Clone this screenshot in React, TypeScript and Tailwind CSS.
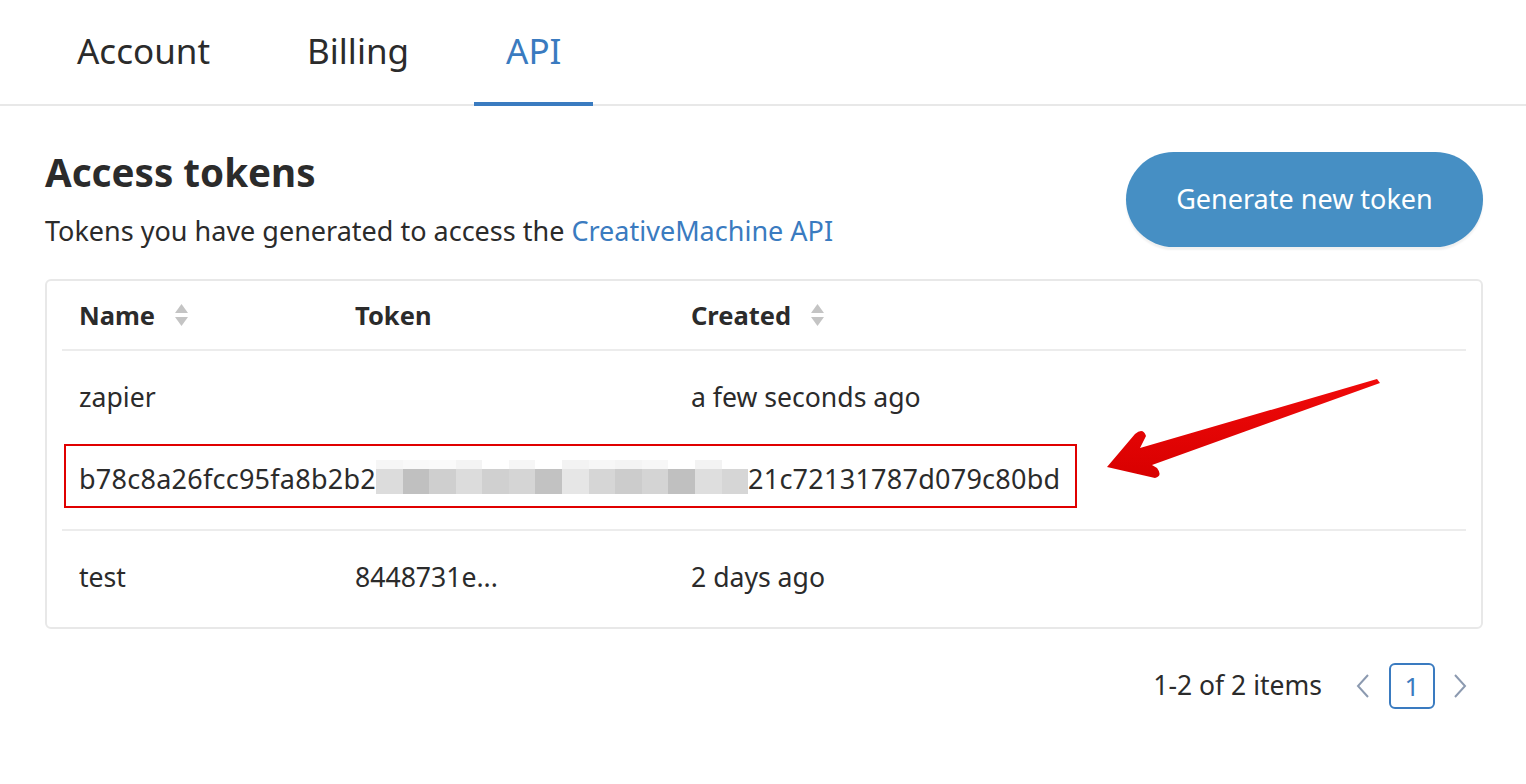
import React from "react";

const blurTop = ["#f6f6f6","#f9f9f9","#fafafa","#f4f4f4","#ffffff","#f6f6f6","#ffffff","#f3f3f3","#f7f7f7","#f4f4f4","#f7f7f7","#ffffff","#f3f3f3","#ffffff"];
const blurBottom = ["#dcdcdc","#c0c0c0","#cfcfcf","#dcdcdc","#d0d0d0","#d5d5d5","#c2c2c2","#e6e6e6","#d6d6d6","#cccccc","#d4d4d4","#c0c0c0","#dedede","#d6d6d6"];

function SortIcon() {
  return (
    <svg width="15" height="24" viewBox="0 0 15 24" className="ml-[19px]">
      <path d="M7.5 1 L14 10 L1 10 Z" fill="#c4c4c4" />
      <path d="M7.5 23 L14 14 L1 14 Z" fill="#c4c4c4" />
    </svg>
  );
}

function Chevron({ dir }: { dir: "left" | "right" }) {
  return (
    <svg width="14" height="26" viewBox="0 0 14 26">
      {dir === "left" ? (
        <polyline points="12,2 2,13 12,24" fill="none" stroke="#8c9ab0" strokeWidth="2" />
      ) : (
        <polyline points="2,2 12,13 2,24" fill="none" stroke="#8c9ab0" strokeWidth="2" />
      )}
    </svg>
  );
}

export default function App() {
  return (
    <div className="relative w-[1526px] h-[784px] bg-white text-[#2b2b2b] font-['Noto_Sans',sans-serif] overflow-hidden">
      <nav className="flex h-[106px] border-b-2 border-[#e8e8e8] pl-[45px] gap-[33px]">
        <div className="px-[32px] flex items-center text-[35px] pb-[2px]">Account</div>
        <div className="px-[32px] flex items-center text-[35px] pb-[2px]">Billing</div>
        <div className="px-[32px] flex items-center text-[35px] text-[#3a7bc0] border-b-4 border-[#3a7bc0] -mb-[2px]">API</div>
      </nav>

      <div className="pl-[45px] pr-[43px]">
        <div className="flex justify-between items-start pt-[42px]">
          <div>
            <h1 className="text-[38.6px] font-bold leading-[48px]">Access tokens</h1>
            <p className="mt-[17px] text-[27px] leading-[36px]">
              Tokens you have generated to access the <span className="text-[#3a7bc0]">CreativeMachine API</span>
            </p>
          </div>
          <button className="mt-[4px] h-[95px] w-[357px] rounded-full bg-[#468fc4] text-white text-[27px] shadow-[0_3px_2px_rgba(0,0,0,0.06)]">
            Generate new token
          </button>
        </div>

        <div className="mt-[30px] h-[350px] border-2 border-[#e8e8e8] rounded-[6px] px-[15px]">
          <div className="h-[70px] flex items-center border-b-2 border-[#ececec] text-[25.5px] font-bold">
            <div className="w-[276px] pl-[17px] flex items-center">Name<SortIcon /></div>
            <div className="w-[336px] pl-[17px]">Token</div>
            <div className="pl-[17px] flex items-center">Created<SortIcon /></div>
          </div>
          <div className="pb-[21px] border-b-2 border-[#ececec] text-[26.6px]">
            <div className="h-[90px] pt-[4px] flex items-center">
              <div className="w-[276px] pl-[17px]">zapier</div>
              <div className="w-[336px] pl-[17px]"></div>
              <div className="pl-[17px]">a few seconds ago</div>
            </div>
            <div className="mt-[3px] ml-[2px] w-[1013px] h-[64px] border-2 border-[#e00000] pl-[13px] pt-[7px] flex items-center text-[27px] tracking-[0.25px]">
              <span>b78c8a26fcc95fa8b2b2</span>
              <div className="w-[372px] h-[34px] -mt-[5px] flex flex-col">
                <div className="h-[9px] flex">
                  {blurTop.map((c, i) => (
                    <div key={i} className="flex-1" style={{ backgroundColor: c }} />
                  ))}
                </div>
                <div className="flex-1 flex">
                  {blurBottom.map((c, i) => (
                    <div key={i} className="flex-1" style={{ backgroundColor: c }} />
                  ))}
                </div>
              </div>
              <span>21c72131787d079c80bd</span>
            </div>
          </div>
          <div className="h-[90px] pt-[4px] flex items-center text-[26.6px]">
            <div className="w-[276px] pl-[17px]">test</div>
            <div className="w-[336px] pl-[17px]">8448731e...</div>
            <div className="pl-[17px]">2 days ago</div>
          </div>
        </div>

        <div className="mt-[34px] flex justify-end items-center pr-[16px]">
          <span className="text-[26.5px]">1-2 of 2 items</span>
          <div className="ml-[34px]"><Chevron dir="left" /></div>
          <div className="ml-[19px] w-[46px] h-[46px] border-2 border-[#3a7bc0] rounded-[6px] flex items-center justify-center text-[26px] text-[#3a7bc0]">1</div>
          <div className="ml-[18px]"><Chevron dir="right" /></div>
        </div>
      </div>

      <svg className="absolute left-0 top-0 pointer-events-none" width="1526" height="784" viewBox="0 0 1526 784">
        <defs>
          <linearGradient id="arr" x1="0" y1="0" x2="0" y2="1">
            <stop offset="0" stopColor="#f00a0a" />
            <stop offset="1" stopColor="#d80000" />
          </linearGradient>
        </defs>
        <path
          d="M1377 379 L1380 383 L1152 465 L1157 468 Q1163 476 1155 478 L1107 467 L1135 434 Q1143 427 1146 436 L1140 448 Z"
          fill="url(#arr)"
        />
      </svg>
    </div>
  );
}
